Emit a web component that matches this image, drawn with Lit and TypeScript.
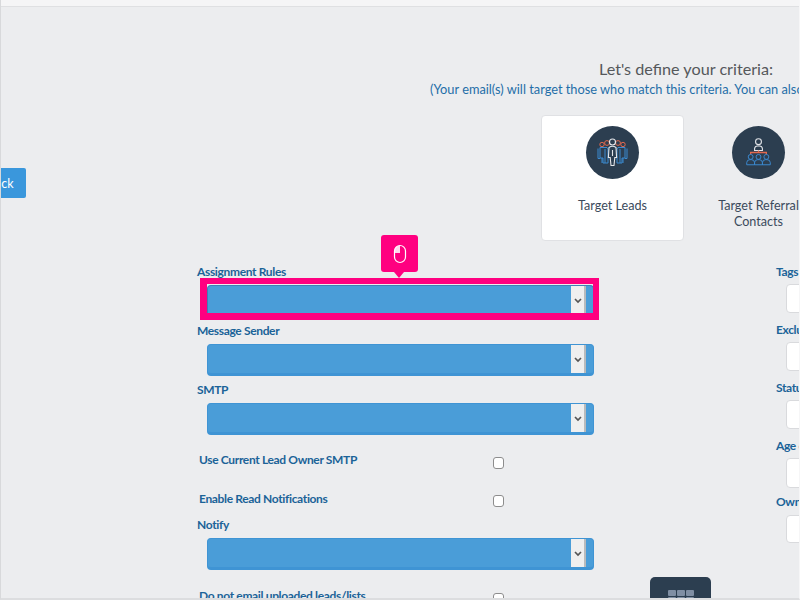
import { LitElement, html, css, svg } from "lit";
import { customElement } from "lit/decorators.js";

const person = (x: number, y: number, c: string) => svg`
    <circle cx=${x} cy=${y} r="2.5" fill="none" stroke=${c} stroke-width="1" />
    <path d="M${x - 4} ${y + 8} v-2.2 a3.2 3.2 0 0 1 3.2 -3 h1.6 a3.2 3.2 0 0 1 3.2 3 v2.2 z" fill="none" stroke=${c} stroke-width="1" />
`;

const leadsIcon = html`
    <svg class="ico" viewBox="0 0 53 53">
        <g fill="none" stroke="#e2694f" stroke-width="1">
            <circle cx="16" cy="18.5" r="2.2" />
            <circle cx="21" cy="17" r="2.4" />
            <circle cx="32" cy="17" r="2.4" />
            <circle cx="37" cy="18.5" r="2.2" />
        </g>
        <g fill="none" stroke="#3b8ad0" stroke-width="1">
            <path d="M14 21.5 h7 l1 1.5 v14 h-5 v-5 h-3 z" />
            <path d="M12 22.5 v10 h2 M16 32 v5 M19 23 v14" />
            <path d="M39 21.5 h-7 l-1 1.5 v14 h5 v-5 h3 z" />
            <path d="M41 22.5 v10 h-2 M37 32 v5 M34 23 v14" />
        </g>
        <g fill="none" stroke="#e4e6ea" stroke-width="1.1">
            <circle cx="26.5" cy="16" r="3" />
            <path d="M23 21.5 q3.5 -2.5 7 0 l0.6 10 h-1.8 l-0.8 8 h-3 l-0.8 -8 h-1.8 z" />
            <path d="M26.5 24 v6" />
        </g>
    </svg>
`;

const referralIcon = html`
    <svg class="ico" viewBox="0 0 54 53">
        <circle cx="27" cy="15.5" r="3" fill="none" stroke="#e4e6ea" stroke-width="1.1" />
        <path d="M23 24.5 v-2 a3 3 0 0 1 3 -2.6 h2 a3 3 0 0 1 3 2.6 v2 z" fill="none" stroke="#e4e6ea" stroke-width="1.1" />
        <path d="M27 24.5 v2 M19 28.5 v-2 h16 v2" fill="none" stroke="#e2694f" stroke-width="1.3" />
        ${person(19, 31, "#3b8ad0")}
        ${person(27, 31, "#3b8ad0")}
        ${person(35, 31, "#3b8ad0")}
    </svg>
`;

@customElement("app-root")
class AppRoot extends LitElement {
    static styles = css`
        :host {
            display: block;
            width: 800px;
            height: 600px;
            font-family: "Lato", "Noto Sans", sans-serif;
        }
        .page {
            position: relative;
            box-sizing: border-box;
            width: 800px;
            height: 600px;
            overflow: hidden;
            background: #ecedef;
            border-left: 1px solid #d8d9db;
            border-right: 1px solid #f6f6f7;
            border-bottom: 2px solid #dcdddf;
        }
        .strip {
            height: 6px;
            background: #f5f5f6;
            border-bottom: 1px solid #dfe0e2;
        }
        .top {
            display: flex;
            align-items: flex-start;
            padding-top: 52px;
        }
        .back {
            flex: none;
            box-sizing: border-box;
            width: 53px;
            height: 30px;
            margin: 109px 0 0 -28px;
            padding-left: 14px;
            line-height: 31px;
            font-size: 12.5px;
            color: #fff;
            background: #3a97dc;
            border-radius: 2px;
        }
        .main {
            flex: none;
            width: 512px;
            margin-left: 404px;
            text-align: center;
        }
        h2 {
            margin: 0 0 1px;
            font-size: 16.2px;
            line-height: 20px;
            font-weight: 400;
            color: #55585b;
        }
        .sub {
            font-size: 12.8px;
            line-height: 18px;
            color: #1f6ea8;
            white-space: nowrap;
        }
        .cards {
            display: flex;
            gap: 3px;
            margin: 17px 0 0 111px;
            text-align: center;
        }
        .card {
            flex: none;
            box-sizing: border-box;
            width: 143px;
            height: 126px;
            padding-top: 10px;
            border: 1px solid transparent;
            border-radius: 4px;
            font-size: 12.6px;
            line-height: 16px;
            color: #3b4a5c;
        }
        .card.active {
            background: #fff;
            border-color: #e0e1e4;
        }
        .ico {
            display: block;
            width: 53px;
            height: 53px;
            margin: 0 auto 19px;
            border-radius: 50%;
            background: #2c3e50;
        }
        .form {
            position: relative;
            display: grid;
            grid-template-columns: 579px 60px;
            margin: 23px 0 0 196px;
        }
        label {
            display: block;
            height: 14px;
            font-size: 12px;
            line-height: 16px;
            letter-spacing: -0.35px;
            font-weight: 700;
            color: #1b6398;
            white-space: nowrap;
        }
        .field {
            margin-bottom: 6px;
        }
        .select {
            box-sizing: border-box;
            display: flex;
            justify-content: flex-end;
            width: 387px;
            height: 32px;
            margin: 7px 0 0 10px;
            padding-right: 7px;
            background: #4a9dd8;
            border: 1px solid #3f94d4;
            border-bottom-width: 3px;
            border-radius: 4px;
        }
        .select.focus {
            border-color: #3f7fb4;
        }
        .chev {
            display: flex;
            align-items: center;
            justify-content: center;
            box-sizing: border-box;
            width: 15px;
            background: #efefef;
            border-right: 2px solid #b9bbbd;
        }
        .chev svg {
            width: 8px;
            height: 6px;
            margin-top: 2px;
        }
        .check {
            display: grid;
            grid-template-columns: 294px 11px;
            height: 26px;
            margin-top: 12px;
            padding-left: 2px;
        }
        .check.first {
            height: 27px;
            margin-top: 17px;
        }
        .check.last {
            margin-top: 18px;
        }
        .check.second input {
            margin-top: 4px;
        }
        .check input {
            width: 11px;
            height: 12px;
            margin: 5px 0 0 0;
            appearance: none;
            background: #fff;
            border: 1px solid #8d8d8d;
            border-radius: 3px;
        }
        .right .field {
            margin-bottom: 0;
        }
        .input {
            box-sizing: border-box;
            width: 60px;
            height: 29px;
            margin: 6px 0 9px 10px;
            background: #fff;
            border: 1px solid #d9dadd;
            border-radius: 4px;
        }
        .right .field:nth-child(4) .input {
            margin-bottom: 8px;
            height: 30px;
            margin-top: 6px;
        }
        .right .field:nth-child(4) {
            margin-bottom: -2px;
        }
        .right .field:nth-child(5) .input {
            height: 28px;
            margin-top: 7px;
        }
        .highlight {
            position: absolute;
            left: 3px;
            top: 14px;
            box-sizing: border-box;
            width: 399px;
            height: 42px;
            border: 6px solid #ff0080;
            border-left-width: 7px;
            border-bottom-width: 7px;
        }
        .tip {
            position: absolute;
            left: 184px;
            top: -29px;
            display: flex;
            align-items: center;
            justify-content: center;
            width: 37px;
            height: 37px;
            background: #ff0080;
            border-radius: 3px;
        }
        .tip::after {
            content: "";
            position: absolute;
            left: 13px;
            bottom: -6px;
            border: 5px solid transparent;
            border-top: 6px solid #ff0080;
            border-bottom: 0;
        }
        .tip svg {
            width: 14px;
            height: 20px;
        }
        .dock {
            position: absolute;
            left: 649px;
            top: 577px;
            display: grid;
            grid-template-columns: repeat(3, 8px);
            gap: 1px;
            justify-content: center;
            align-content: start;
            box-sizing: border-box;
            width: 61px;
            height: 40px;
            padding-top: 13px;
            background: #2c3e50;
            border-radius: 5px 5px 0 0;
        }
        .dock span {
            height: 6px;
            background: #7f8ea3;
            border-radius: 1px;
        }
    `;

    renderSelect(focus = false) {
        return html`<div class="select ${focus ? "focus" : ""}">
            <div class="chev">
                <svg viewBox="0 0 8 6"><path d="M1 1 L4 4 L7 1" fill="none" stroke="#555" stroke-width="1.7" /></svg>
            </div>
        </div>`;
    }

    renderField(name: string, focus = false) {
        return html`<div class="field"><label>${name}</label>${this.renderSelect(focus)}</div>`;
    }

    renderCheck(name: string, cls = "") {
        return html`<div class="check ${cls}"><label>${name}</label><input type="checkbox" /></div>`;
    }

    render() {
        const rightFields = ["Tags", "Exclude Tags", "Status", "Age of Lead", "Owner"];
        return html`
            <div class="page">
                <div class="strip"></div>
                <div class="top">
                    <div class="back">Back</div>
                    <div class="main">
                        <h2>Let's define your criteria:</h2>
                        <div class="sub">(Your email(s) will target those who match this criteria. You can also narrow it down further below.)</div>
                        <div class="cards">
                            <div class="card active">${leadsIcon}Target Leads</div>
                            <div class="card">${referralIcon}Target Referral<br />Contacts</div>
                        </div>
                    </div>
                </div>
                <div class="form">
                    <div class="left">
                        ${this.renderField("Assignment Rules", true)}
                        ${this.renderField("Message Sender")}
                        ${this.renderField("SMTP")}
                        ${this.renderCheck("Use Current Lead Owner SMTP", "first")}
                        ${this.renderCheck("Enable Read Notifications", "second")}
                        ${this.renderField("Notify")}
                        ${this.renderCheck("Do not email uploaded leads/lists", "last")}
                    </div>
                    <div class="right">
                        ${rightFields.map(
                            (f) => html`<div class="field"><label>${f}</label><div class="input"></div></div>`
                        )}
                    </div>
                    <div class="highlight"></div>
                    <div class="tip">
                        <svg viewBox="0 0 14 20">
                            <rect x="1.5" y="1.5" width="11" height="17" rx="5.5" fill="none" stroke="#fff" stroke-width="1.2" />
                            <path d="M7 1.5 A5.5 5.5 0 0 0 1.5 7 V9 H7 Z" fill="#fff" opacity="0.85" />
                        </svg>
                    </div>
                </div>
                <div class="dock">
                    ${[0, 1, 2, 3, 4, 5].map(() => html`<span></span>`)}
                </div>
            </div>
        `;
    }
}
